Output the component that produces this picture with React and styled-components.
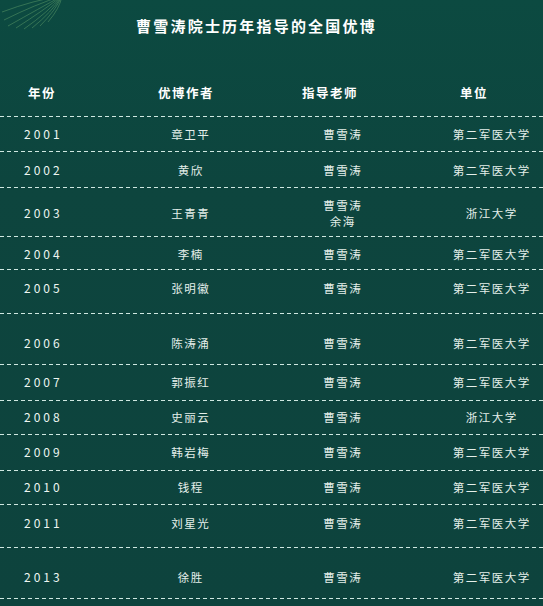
import React from 'react'
import styled, { createGlobalStyle } from 'styled-components'

const GlobalStyle = createGlobalStyle`
  html, body {
    margin: 0;
    padding: 0;
    background: #0d453e;
  }
  body {
    font-family: "Noto Sans CJK SC", "Noto Sans", sans-serif;
    color: #e4efea;
  }
`

const rows = [
  { year: '2001', name: '章卫平', teachers: ['曹雪涛'], unit: '第二军医大学', pt: 10, pb: 10 },
  { year: '2002', name: '黄欣', teachers: ['曹雪涛'], unit: '第二军医大学', pt: 11, pb: 10 },
  { year: '2003', name: '王青青', teachers: ['曹雪涛', '余海'], unit: '浙江大学', pt: 9, pb: 7 },
  { year: '2004', name: '李楠', teachers: ['曹雪涛'], unit: '第二军医大学', pt: 10, pb: 8 },
  { year: '2005', name: '张明徽', teachers: ['曹雪涛'], unit: '第二军医大学', pt: 11, pb: 18 },
  { year: '2006', name: '陈涛涌', teachers: ['曹雪涛'], unit: '第二军医大学', pt: 22, pb: 14 },
  { year: '2007', name: '郭振红', teachers: ['曹雪涛'], unit: '第二军医大学', pt: 10, pb: 11 },
  { year: '2008', name: '史丽云', teachers: ['曹雪涛'], unit: '浙江大学', pt: 9, pb: 10 },
  { year: '2009', name: '韩岩梅', teachers: ['曹雪涛'], unit: '第二军医大学', pt: 10, pb: 11 },
  { year: '2010', name: '钱程', teachers: ['曹雪涛'], unit: '第二军医大学', pt: 9, pb: 10 },
  { year: '2011', name: '刘星光', teachers: ['曹雪涛'], unit: '第二军医大学', pt: 11, pb: 17 },
  { year: '2013', name: '徐胜', teachers: ['曹雪涛'], unit: '第二军医大学', pt: 22, pb: 14 },
]

const App = () => {
  return (
    <>
      <GlobalStyle />
      <Page>
        <Palm viewBox="0 0 70 30" aria-hidden="true">
          {[
            'M62 -4 Q40 8 8 26',
            'M62 -4 Q44 10 16 28',
            'M62 -4 Q48 12 24 29',
            'M62 -4 Q52 12 32 28',
            'M62 -4 Q56 10 40 26',
            'M62 -4 Q60 8 48 22',
            'M62 -4 Q36 4 4 20',
            'M62 -4 Q34 0 2 12',
          ].map((d, i) => (
            <path key={i} d={d} />
          ))}
        </Palm>
        <Title>曹雪涛院士历年指导的全国优博</Title>
        <HeaderRow>
          <HeadCell>年份</HeadCell>
          <HeadCell>优博作者</HeadCell>
          <HeadCell>指导老师</HeadCell>
          <HeadCell>单位</HeadCell>
        </HeaderRow>
        {rows.map((r) => (
          <Row key={r.year} $pt={r.pt} $pb={r.pb}>
            <Year>{r.year}</Year>
            <Cell>{r.name}</Cell>
            <Cell $lines={r.teachers.length}>
              {r.teachers.map((t) => (
                <div key={t}>{t}</div>
              ))}
            </Cell>
            <Cell>{r.unit}</Cell>
          </Row>
        ))}
      </Page>
    </>
  )
}

export default App

const Page = styled.div`
  position: relative;
  width: 543px;
  min-height: 606px;
  padding-top: 16px;
  box-sizing: border-box;
  background: linear-gradient(to bottom, #0c4a41 0%, #0d453e 30%, #0d433d 100%);
  overflow: hidden;
`

const Palm = styled.svg`
  position: absolute;
  top: 0;
  left: 0;
  width: 70px;
  height: 30px;
  fill: none;
  stroke: #6fae72;
  stroke-width: 0.6;
  opacity: 0.7;
`

const Title = styled.div`
  font-size: 15px;
  line-height: 20px;
  font-weight: 700;
  letter-spacing: 2.2px;
  color: #ffffff;
  text-align: center;
  padding-right: 30px;
`

const dashed = `
  background-image: repeating-linear-gradient(
    to right,
    #cfe8e1 0 4px,
    transparent 4px 7px
  );
  background-size: 100% 1px;
  background-position: left bottom;
  background-repeat: no-repeat;
`

const HeaderRow = styled.div`
  display: grid;
  grid-template-columns: 130px 144px 158px 111px;
  margin-top: 49px;
  padding-bottom: 16px;
  ${dashed}
`

const HeadCell = styled.div`
  padding-left: 28px;
  font-size: 12.5px;
  line-height: 16px;
  font-weight: 700;
  letter-spacing: 1.5px;
  color: #ffffff;
`

const Row = styled.div`
  display: grid;
  grid-template-columns: 135px 110px 194px 104px;
  align-items: center;
  padding-top: ${(p) => p.$pt}px;
  padding-bottom: ${(p) => p.$pb + 1}px;
  ${dashed}
`

const Year = styled.div`
  padding-left: 24px;
  font-size: 12px;
  line-height: 14px;
  letter-spacing: 3px;
  color: #eef6f2;
`

const Cell = styled.div`
  text-align: center;
  font-size: 11.5px;
  line-height: ${(p) => (p.$lines > 1 ? 16 : 14)}px;
  letter-spacing: 1.5px;
  padding-left: 1.5px;
`
